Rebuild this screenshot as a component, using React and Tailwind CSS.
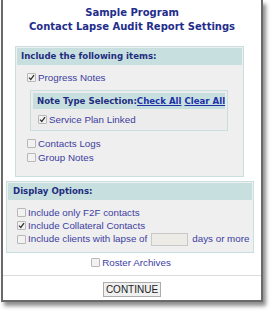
import React from "react";

function Box({ checked }) {
  return (
    <span className="inline-flex h-[9px] w-[9px] shrink-0 items-center justify-center rounded-[1px] border border-[#b8b8b8] bg-[#f2f2f2]">
      {checked && (
        <svg width="7" height="7" viewBox="0 0 7 7">
          <path d="M1 3.6 L2.8 5.4 L6 1.2" stroke="#333" strokeWidth="1.3" fill="none" />
        </svg>
      )}
    </span>
  );
}

function Row({ checked, children, className = "" }) {
  return (
    <div className={"flex items-center gap-[2px] h-[13px] whitespace-nowrap " + className}>
      <Box checked={checked} />
      <span className="text-[9.8px] leading-[13px] text-[#3d3d9f]">{children}</span>
    </div>
  );
}

export default function App() {
  const bold = { fontFamily: '"DejaVu Sans", Verdana, sans-serif' };
  return (
    <div className="h-[314px] w-[274px] bg-white" style={{ fontFamily: '"Liberation Sans", Arial, sans-serif' }}>
      <div className="ml-[1px] flex h-[302px] w-[262px] flex-col border-x-2 border-b-2 border-[#6a6a6a] bg-white shadow-[3px_4px_4px_rgba(0,0,0,0.45)]">
        <div className="mt-[6px] whitespace-nowrap text-center text-[10px] font-bold leading-[14px] text-[#1f2d8c]" style={bold}>
          <div>Sample Program</div>
          <div>Contact Lapse Audit Report Settings</div>
        </div>

        <div className="ml-[12px] mt-[12px] h-[131px] w-[229px] border border-[#c9dede] bg-[#efefef] p-[1px]">
          <div className="flex h-[17px] items-center whitespace-nowrap bg-[#c7e0df] pl-[4px] text-[8.6px] font-bold text-[#1f2d80]" style={bold}>
            Include the following items:
          </div>
          <Row checked className="ml-[10px] mt-[6px]">Progress Notes</Row>
          <div className="ml-[13px] mt-[6px] h-[41px] w-[198px] border border-[#c9dede] bg-[#ececec] p-[2px]">
            <div className="flex h-[16px] items-center whitespace-nowrap bg-[#c7e0df] pl-[4px] text-[8.6px] font-bold" style={bold}>
              <span className="text-[#1f2d80]">Note Type Selection:</span>
              <span className="text-[#2130a8] underline">Check All</span>
              <span className="ml-[3px] text-[#2130a8] underline">Clear All</span>
            </div>
            <Row checked className="ml-[5px] mt-[4px]">Service Plan Linked</Row>
          </div>
          <Row className="ml-[10px] mt-[6px]">Contacts Logs</Row>
          <Row className="ml-[10px] mt-[1px]">Group Notes</Row>
        </div>

        <div className="ml-[3px] mt-[4px] h-[72px] w-[248px] border border-[#c9dede] bg-[#efefef] p-[1px]">
          <div className="flex h-[17px] items-center whitespace-nowrap bg-[#c7e0df] pl-[5px] text-[8.6px] font-bold text-[#1f2d80]" style={bold}>
            Display Options:
          </div>
          <Row className="ml-[9px] mt-[6px]">Include only F2F contacts</Row>
          <Row checked className="ml-[9px] mt-[0px]">Include Collateral Contacts</Row>
          <div className="ml-[9px] flex h-[14px] items-center gap-[2px] whitespace-nowrap">
            <Box />
            <span className="text-[9.8px] text-[#3d3d9f]">Include clients with lapse of</span>
            <span className="ml-[2px] h-[13px] w-[37px] shrink-0 border border-[#c8c8c8] bg-[#ecebe6]" />
            <span className="ml-[2px] text-[9.8px] text-[#3d3d9f]">days or more</span>
          </div>
        </div>

        <div className="mt-[3px] flex justify-center">
          <Row className="ml-[-2px]">Roster Archives</Row>
        </div>
        <div className="mt-[6px] h-px w-full bg-[#dcdcdc]" />
        <div className="mt-[6px] flex justify-center">
          <div className="flex h-[15px] w-[58px] items-center justify-center border border-[#acacac] bg-[#f0f0f0] text-[10px] text-[#222]">
            CONTINUE
          </div>
        </div>
      </div>
    </div>
  );
}
